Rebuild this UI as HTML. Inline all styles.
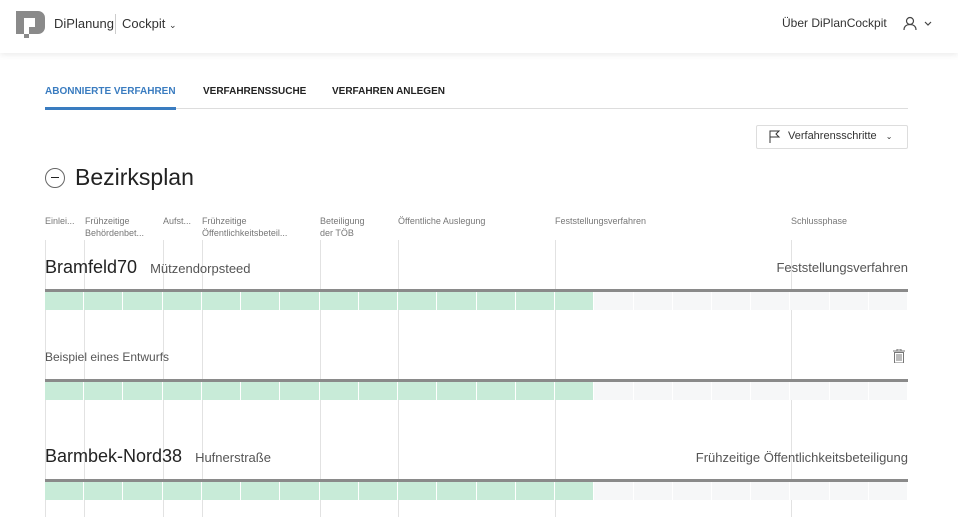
<!DOCTYPE html>
<html><head><meta charset="utf-8"><style>
*{margin:0;padding:0;box-sizing:border-box}
body{width:958px;height:517px;overflow:hidden;background:#fff;font-family:"Liberation Sans",sans-serif;color:#222;position:relative}
.a{position:absolute;white-space:nowrap}
.hdr{position:absolute;left:0;top:0;width:958px;height:53px;background:#fff;box-shadow:0 2px 6px rgba(0,0,0,.08)}
.vl{position:absolute;top:240px;bottom:0;width:1px;background:#e2e2e2}
.ph{position:absolute;top:215px;font-size:9px;color:#777;line-height:12px}
.bar{position:absolute;left:45px;width:863px;height:21px;border-top:3px solid #8a8a8a;display:flex}
.bar i{flex:1;height:18px;background:#f6f7f8;border-right:1px solid #fff}
.bar i.g{background:#c8ebd8}
</style></head><body>
<div class="hdr">
<svg class="a" style="left:16px;top:11px" width="30" height="27" viewBox="0 0 30 27"><path d="M0 0H22a7 7 0 0 1 7 7V16a7 7 0 0 1-7 7H13V16H19V7H8V23H0Z" fill="#8a8a8a"/><rect x="8" y="23" width="5" height="4" fill="#8a8a8a"/></svg>
<div class="a" style="left:54px;top:16px;font-size:13px;color:#333">DiPlanung</div>
<div class="a" style="left:115px;top:14px;width:1px;height:20px;background:#ccc"></div>
<div class="a" style="left:122px;top:16px;font-size:13px;color:#333">Cockpit <span style="font-size:9px">&#8964;</span></div>
<div class="a" style="left:782px;top:16px;font-size:12px;color:#333">Über DiPlanCockpit</div>
<svg class="a" style="left:903px;top:16px" width="32" height="16" viewBox="0 0 32 16"><circle cx="7" cy="5" r="3.5" fill="none" stroke="#444" stroke-width="1.2"/><path d="M1 14c0-4 3-5.5 6-5.5s6 1.5 6 5.5" fill="none" stroke="#444" stroke-width="1.2"/><path d="M22 6l3 3 3-3" fill="none" stroke="#444" stroke-width="1.2"/></svg>
</div>
<div class="a" style="left:45px;top:86px;font-size:10px;font-weight:bold;color:#3a7cc0">ABONNIERTE VERFAHREN</div>
<div class="a" style="left:203px;top:86px;font-size:10px;font-weight:bold;color:#222">VERFAHRENSSUCHE</div>
<div class="a" style="left:332px;top:86px;font-size:10px;font-weight:bold;color:#222">VERFAHREN ANLEGEN</div>
<div class="a" style="left:45px;top:108px;width:863px;height:1px;background:#ddd"></div>
<div class="a" style="left:45px;top:107px;width:131px;height:3px;background:#3a7cc0"></div>
<div class="a" style="left:756px;top:125px;width:152px;height:24px;border:1px solid #ddd;border-radius:2px"></div>
<svg class="a" style="left:769px;top:130px" width="12" height="13" viewBox="0 0 12 13"><path d="M1 13V1h9l-3 3 3 3H1" fill="none" stroke="#333" stroke-width="1"/></svg>
<div class="a" style="left:788px;top:130px;font-size:11px;color:#333">Verfahrensschritte <span style="font-size:8px;margin-left:6px">&#8964;</span></div>
<div class="a" style="left:45px;top:168px;width:20px;height:20px;border:1px solid #666;border-radius:50%"></div>
<div class="a" style="left:51px;top:177px;width:8px;height:1px;background:#222"></div>
<div class="a" style="left:75px;top:164px;font-size:23px;color:#222">Bezirksplan</div>
<div class="ph" style="left:45px">Einlei...</div>
<div class="ph" style="left:85px">Frühzeitige<br>Behördenbet...</div>
<div class="ph" style="left:163px">Aufst...</div>
<div class="ph" style="left:202px">Frühzeitige<br>Öffentlichkeitsbeteil...</div>
<div class="ph" style="left:320px">Beteiligung<br>der TÖB</div>
<div class="ph" style="left:398px">Öffentliche Auslegung</div>
<div class="ph" style="left:555px">Feststellungsverfahren</div>
<div class="ph" style="left:791px">Schlussphase</div>
<div class="vl" style="left:45px"></div><div class="vl" style="left:84px"></div><div class="vl" style="left:163px"></div><div class="vl" style="left:202px"></div><div class="vl" style="left:320px"></div><div class="vl" style="left:398px"></div><div class="vl" style="left:555px"></div><div class="vl" style="left:791px"></div>
<div class="a" style="left:45px;top:257px;font-size:18px;color:#222">Bramfeld70 <span style="font-size:13px;color:#555;margin-left:8px">Mützendorpsteed</span></div>
<div class="a" style="right:50px;top:260px;font-size:13px;color:#555">Feststellungsverfahren</div>
<div class="bar" style="top:289px"><i class="g"></i><i class="g"></i><i class="g"></i><i class="g"></i><i class="g"></i><i class="g"></i><i class="g"></i><i class="g"></i><i class="g"></i><i class="g"></i><i class="g"></i><i class="g"></i><i class="g"></i><i class="g"></i><i></i><i></i><i></i><i></i><i></i><i></i><i></i><i></i></div>
<div class="a" style="left:45px;top:350px;font-size:12px;color:#555">Beispiel eines Entwurfs</div>
<svg class="a" style="left:893px;top:349px" width="12" height="14" viewBox="0 0 12 14"><path d="M0 2h12M4 2V0h4v2M1.5 3.5h9V14h-9z M4 5v7M6 5v7M8 5v7" fill="none" stroke="#777" stroke-width="1"/></svg>
<div class="bar" style="top:379px"><i class="g"></i><i class="g"></i><i class="g"></i><i class="g"></i><i class="g"></i><i class="g"></i><i class="g"></i><i class="g"></i><i class="g"></i><i class="g"></i><i class="g"></i><i class="g"></i><i class="g"></i><i class="g"></i><i></i><i></i><i></i><i></i><i></i><i></i><i></i><i></i></div>
<div class="a" style="left:45px;top:446px;font-size:18px;color:#222">Barmbek-Nord38 <span style="font-size:13px;color:#555;margin-left:8px">Hufnerstraße</span></div>
<div class="a" style="right:50px;top:450px;font-size:13px;color:#555">Frühzeitige Öffentlichkeitsbeteiligung</div>
<div class="bar" style="top:479px"><i class="g"></i><i class="g"></i><i class="g"></i><i class="g"></i><i class="g"></i><i class="g"></i><i class="g"></i><i class="g"></i><i class="g"></i><i class="g"></i><i class="g"></i><i class="g"></i><i class="g"></i><i class="g"></i><i></i><i></i><i></i><i></i><i></i><i></i><i></i><i></i></div>
</body></html>
